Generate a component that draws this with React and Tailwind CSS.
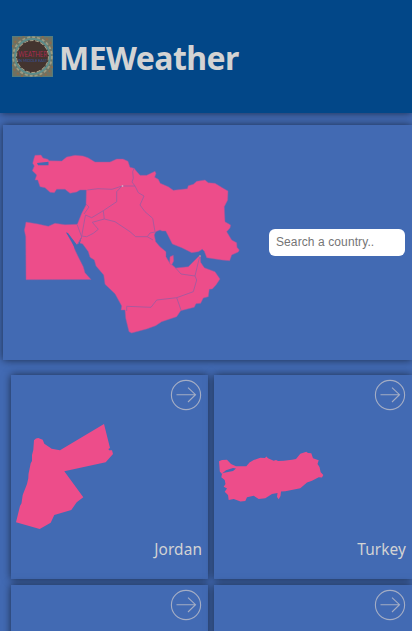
const PINK = "#ed4d8a";

function Logo() {
  return (
    <svg className="size-[41px] shrink-0" viewBox="0 0 41 41">
      <rect width="41" height="41" fill="#6f7263" />
      <path d="M0 0h41v41H0z" fill="none" stroke="#4f8084" strokeWidth="1.5" />
      <circle cx="20.5" cy="20.5" r="22.5" fill="none" stroke="#8d6a4c" strokeWidth="2" strokeDasharray="2 3" />
      <circle cx="20.5" cy="20.5" r="19.3" fill="none" stroke="#9b9b83" strokeWidth="2" strokeDasharray="3 2" />
      <circle cx="20.5" cy="20.5" r="17.4" fill="#43342f" stroke="#5c8c8a" strokeWidth="2" />
      <circle cx="20.5" cy="20.5" r="15.9" fill="#43342f" stroke="#a39d86" strokeWidth="1.2" strokeDasharray="4 1.5" />
      <circle cx="20.5" cy="20.5" r="15.2" fill="#43342f" />
      <text x="20.7" y="21.3" textAnchor="middle" textLength="29" lengthAdjust="spacingAndGlyphs" fontFamily="Lato, sans-serif" fontSize="6.8" fill="#a72c50">WEATHER</text>
      <text x="20.7" y="26.3" textAnchor="middle" textLength="29" lengthAdjust="spacingAndGlyphs" fontFamily="Lato, sans-serif" fontSize="3.8" fill="#35569f">IN MIDDLE EAST</text>
    </svg>
  );
}

function RegionMap() {
  return (
    <svg className="mb-[5px] h-[200px] w-[235px] shrink-0" viewBox="15 140 235 200">
      <g fill={PINK} stroke="#9a5ba0" strokeWidth="0.5" strokeLinejoin="round">
        <path d="M32.7 163.3L34 158.3 35 155.3 41 155 43 158 48 159.3 49 160.7 61.7 161 66.7 157 75 155.3 83 156 88 157.7 95 162 110 162 116.7 159 123 159 128 161.3 130 167.3 134 168.3 140 175.3 146.7 175.3 155 171.3 156 173.5 154.7 177.3 158.3 179.3 160.3 183.3 168.3 186.7 173.3 190.3 187.3 188.7 188.3 185.7 193.3 184.3 196.7 181.3 205 180 208.3 182.7 215 183.3 222.3 187.7 228 191 227.7 200 224.3 206.7 225 221.7 230.7 225 230 228 226.7 231.7 231.7 240 236.7 242.7 237 247.3 239.3 250 238.3 252 231.7 255 229.7 260.7 221.7 260 206.7 257.7 204.3 251.3 202.3 249.3 198.3 251.7 191.7 252.7 181.7 247.7 172.3 244 168.3 236 165.7 231 162 231 160 230 155.7 231.7 154.3 235 155.7 241.7 160 246.7 166 251.7 166 256.7 169.3 262.3 175.7 268 188.3 266.7 193.3 261.7 198.3 256.7 200.3 255.5 200.7 262.3 204.3 267.7 215 271.7 220 279 216 285 212.3 289 209.3 289.3 208.3 296.7 203.3 298 200.7 303.3 196 303.7 194.3 307.3 180.7 310.7 176.7 316.7 161.7 321.7 155.7 325.7 146.7 329 131.7 333 129 331.7 125.7 318.3 125 310 121 310 121.7 306 115 293.8 105 284.3 103.7 275 96 266 94.3 260 90 257.3 88.3 251.7 82.7 244 79 242.7 77 245.3 66.7 232.7 70 239.3 74 246 75 250 79 258.3 83.3 266.7 85 272.7 91 279.5 26 279.7 25.7 236.7 24.3 230 25 227.3 26 222 38 224 48.3 226.3 55 223.3 65 224.7 77.3 224.3 81.7 213.3 86 205 86.3 190 80 190 76.7 192 70 193.3 65 189.3 56.7 189.3 54.3 192.7 50 192.3 45 187.7 40 186.7 37.7 180 35 180 36.7 175 32.3 170.7 34.3 166Z" />
        <path d="M170 256.7L173.3 255.3 173.7 261 171.7 265 169.5 263.3Z" />
      </g>
      <path d="M37 163L48.5 161.8 48.5 165.3 38 165.3ZM66 232.5L68 233 77 245 82 236 79.5 244.5 75 249 71 240Z" fill="#426ab3" />
      <g fill="none" stroke="#a35a9f" strokeWidth="0.9" strokeLinejoin="round">
        <path d="M87.3 190L98 188.7 112 189.3 122 186 135 186M134 168.3L132.7 171.7 133.3 178.3 132 182 135 186 138.3 192.7 144 196 140 205 145 211.7 152.7 218.3 155 231.7" />
        <path d="M122 186L116.7 191.7 116.7 201.7 103.3 210.7 91.7 217.7 85.5 215 84 223 81.7 236 86.7 236.7 93.3 233.3 98.3 229.3 92.3 222.3 104.3 219 115 221.7 130 231.7 135.7 236.7 147.3 236.7 150 233 155 232M103.3 210.7L104.3 219M77.3 225L81.7 237 78 244M84 214L89 207 86 204M147.3 236.7L153 240" />
        <path d="M126.7 311V306.3L151 307.3 156.7 300 176.7 297.7 193.3 291.7 196.7 280 195 276 181 274 175.7 268M176.7 297.7L181 310M195 276L198.3 262 200 256" />
      </g>
      <circle cx="122.5" cy="186" r="0.9" fill="#d6a5bd" />
      <circle cx="200" cy="256" r="0.8" fill="#b8a9a5" />
    </svg>
  );
}

function JordanMap() {
  return (
    <svg className="h-[120px] w-[110px]" viewBox="11 411 110 120">
      <path fill={PINK} d="M32 455L33.3 450 34 440.3 36 438.5 38.3 438 42.7 439.7 44.3 443.7 51.7 448.7 60 450.3 104 424 110 448 108.5 449 109 450.3 112 450.3 113 454 105.7 462.3 64.3 471.3 83.3 497.3 76.7 502.3 71.3 510 54.3 515 50.7 522.7 39.7 529 16 522.3 20 506 21.5 503.3 22.7 495 27 484 28.3 478.3 28.5 474 30.7 463.3 32 461Z" />
    </svg>
  );
}

function TurkeyMap() {
  return (
    <svg className="h-[120px] w-[115px]" viewBox="214 411 115 120">
      <path fill={PINK} d="M219 461.3L222 460 227 459.7 231 464 236 466.3 246.3 466.3 249.5 462.5 253.7 460 260.3 457.7 265 458 266.3 456.5 268 458.3 273.7 460.7 276 460 278 461 283.7 460.7 292 459.7 296 459 300.3 453.7 306.3 451.7 308 453 311.3 453.3 313 458.3 318.7 460.3 317.5 464 319.5 467 320.7 472.3 323.3 475 322 477.5 318.7 477.3 312 480.7 307 482.5 300.3 488.3 285.3 491.3 281 491.5 280.5 496 278.7 499.3 277 497 277.5 493 272 494 265.3 498.3 258.7 499 253.7 495.7 247 497.3 245.3 501 240.5 501.5 233.7 499 228.7 500 228 495 224.7 491.7 227 488.5 223.7 486.7 225.5 484 224.7 480 221.3 477.3 222 474 219.8 471.5Z" />
      <path fill="#426ab3" d="M222 473.5L226 470.3 233 468 236 468.5 233 471 228 472 224 472.7Z" />
    </svg>
  );
}

function ArrowCircle() {
  return (
    <svg className="mr-[6px] size-8 shrink-0 self-end" viewBox="0 0 32 32" fill="none" stroke="#a4adc4" strokeWidth="1.1">
      <circle cx="16" cy="16" r="14.6" />
      <path d="M6.5 15.7H25.5M18 8.7L25.5 15.7 18 23" />
    </svg>
  );
}

function Card({ name, children }) {
  return (
    <article className="flex h-[204px] flex-col bg-[#426ab3] pt-1 shadow-[0_0_8px_rgba(0,0,0,0.6)]">
      <ArrowCircle />
      {children}
      {name && (
        <span className="mt-[7px] mr-[6px] self-end text-[15.4px] leading-6 tracking-[0.1px] text-[#d3d3d3]">{name}</span>
      )}
    </article>
  );
}

export default function App() {
  return (
    <div className="h-[631px] w-[412px] overflow-hidden bg-[#426ab3] font-['Noto_Sans','Open_Sans',sans-serif]">
      <header className="flex h-[113px] items-center bg-[#024788] pl-3 shadow-[0_0_8px_rgba(0,0,0,0.6)]">
        <div className="flex items-center gap-[6px]">
          <Logo />
          <h1 className="pt-[2px] text-[32px] leading-none font-bold tracking-[-0.55px] text-[#d3d3d3]">MEWeather</h1>
        </div>
      </header>
      <section className="mt-3 ml-[3px] flex h-[235px] items-center bg-[#426ab3] pl-3 shadow-[0_0_8px_rgba(0,0,0,0.6)]">
        <RegionMap />
        <input
          className="ml-[19.4px] h-[27px] w-[136px] rounded-[6px] bg-white px-[6.6px] pb-[2px] font-['Liberation_Sans',Arial,sans-serif] text-[12px] tracking-[0.1px] text-[#757575] placeholder:text-[#757575]"
          placeholder="Search a country.."
        />
      </section>
      <main className="mt-[15px] ml-[11px] grid grid-cols-[197px_198px] gap-[6px]">
        <Card name="Jordan"><JordanMap /></Card>
        <Card name="Turkey"><TurkeyMap /></Card>
        <Card />
        <Card />
      </main>
    </div>
  );
}
